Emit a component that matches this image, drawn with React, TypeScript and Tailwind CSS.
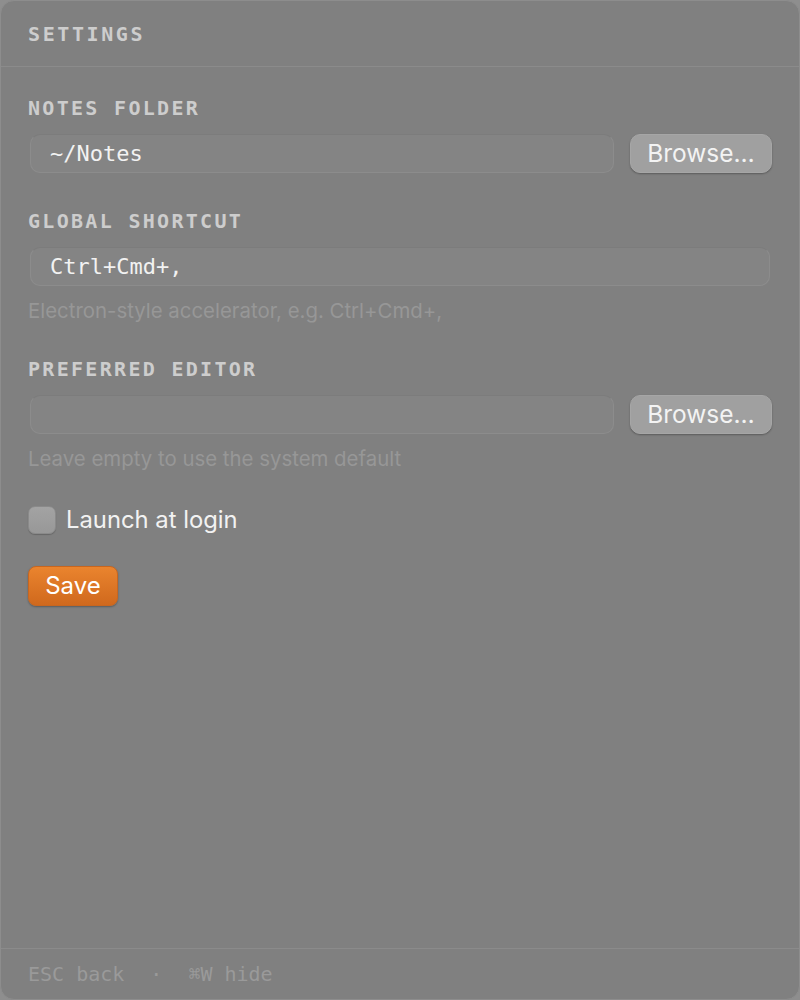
import React from "react";

const mono = { fontFamily: '"DejaVu Sans Mono", "Liberation Mono", monospace' };
const sans = { fontFamily: 'Inter, "Liberation Sans", sans-serif' };

function Label({ children }: { children: React.ReactNode }) {
  return (
    <div
      className="text-[20px] leading-6 font-bold tracking-[2.3px] text-[#cdcdcd] mb-[14px]"
      style={mono}
    >
      {children}
    </div>
  );
}

function Field({ value }: { value?: string }) {
  return (
    <div
      className="flex-1 h-[39px] mx-[2px] rounded-[10px] bg-[#848484] border border-[#8c8c8c] border-t-[#7c7c7c] flex items-center pl-[19px] text-[22px] text-[#f2f2f2]"
      style={mono}
    >
      {value}
    </div>
  );
}

function BrowseButton() {
  return (
    <button
      className="w-[142px] h-[39px] rounded-[10px] bg-[#a0a0a0] text-[#f3f3f3] text-[24.5px] flex items-center justify-center shadow-[0_1px_2px_rgba(0,0,0,0.3)] border border-[#a6a6a6]"
      style={sans}
    >
      Browse…
    </button>
  );
}

function Helper({ children }: { children: React.ReactNode }) {
  return (
    <div className="mt-[13px] text-[20.4px] leading-6 text-[#979797]" style={sans}>
      {children}
    </div>
  );
}

export default function App() {
  return (
    <div className="w-[800px] h-[1000px] bg-[#8e8e8e]">
      <div className="w-full h-full rounded-[14px] bg-[#808080] border border-[#8d8d8d] flex flex-col overflow-hidden">
        <div className="h-[66px] flex items-center px-[27px] border-b border-[#8b8b8b]">
          <div
            className="text-[20px] leading-6 font-bold tracking-[2.6px] text-[#cdcdcd] mt-[1px]"
            style={mono}
          >
            SETTINGS
          </div>
        </div>

        <div className="flex-1 px-[27px] pt-[29px] flex flex-col">
          <div>
            <Label>NOTES FOLDER</Label>
            <div className="flex items-center gap-[14px]">
              <Field value="~/Notes" />
              <BrowseButton />
            </div>
          </div>

          <div className="mt-[36px]">
            <Label>GLOBAL SHORTCUT</Label>
            <div className="flex">
              <Field value="Ctrl+Cmd+," />
            </div>
            <Helper>Electron-style accelerator, e.g. Ctrl+Cmd+,</Helper>
          </div>

          <div className="mt-[34px]">
            <Label>PREFERRED EDITOR</Label>
            <div className="flex items-center gap-[14px]">
              <Field />
              <BrowseButton />
            </div>
            <Helper>Leave empty to use the system default</Helper>
          </div>

          <div className="mt-[35px] flex items-center gap-[10px]">
            <div className="w-[28px] h-[28px] rounded-[7px] bg-gradient-to-b from-[#a3a3a3] to-[#989898] border border-[#8a8a8a] shadow-[0_1px_1px_rgba(0,0,0,0.2)]" />
            <div className="text-[23.8px] text-[#f2f2f2] leading-7" style={sans}>
              Launch at login
            </div>
          </div>

          <div className="mt-[32px]">
            <button
              className="w-[90px] h-[40px] rounded-[8px] bg-gradient-to-b from-[#ea842e] to-[#d0691d] border border-[#c8661f] text-white text-[24px] flex items-center justify-center shadow-[0_1px_2px_rgba(0,0,0,0.3)]"
              style={sans}
            >
              Save
            </button>
          </div>
        </div>

        <div
          className="h-[51px] border-t border-[#8b8b8b] px-[27px] flex items-center gap-[26px] text-[20px] text-[#9a9a9a]"
          style={mono}
        >
          <span>ESC back</span>
          <span>·</span>
          <span>⌘W hide</span>
        </div>
      </div>
    </div>
  );
}
